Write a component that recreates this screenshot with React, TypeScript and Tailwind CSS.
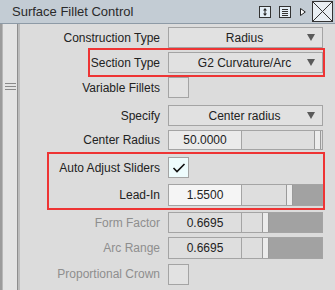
import React from "react";

const font = { fontFamily: '"Liberation Sans", Arial, sans-serif' };

function Arrow() {
  return (
    <svg width="8" height="7" viewBox="0 0 8 7" className="absolute right-[7px] top-[6px]">
      <path d="M0 0 H8 L4 7 Z" fill="#5a5a5a" />
    </svg>
  );
}

function Dropdown({ text }: { text: string }) {
  return (
    <div className="relative w-[155px] h-[21px] border border-[#a4a4a4] bg-[#e1e1e1] flex items-center justify-center text-[12px] text-[#222]">
      <span className="-ml-[2px]">{text}</span>
      <Arrow />
    </div>
  );
}

function Label({ text, disabled }: { text: string; disabled?: boolean }) {
  return (
    <div
      className={`w-[148px] shrink-0 pr-[8px] text-right text-[12px] whitespace-nowrap ${disabled ? "text-[#8e8e8e]" : "text-[#222]"}`}
    >
      {text}
    </div>
  );
}

function Check({ checked }: { checked?: boolean }) {
  return (
    <div
      className={`w-[21px] h-[21px] border border-[#a4a4a4] flex items-center justify-center ${checked ? "bg-[#eefcfd]" : "bg-[#e2e2e2]"}`}
    >
      {checked && (
        <svg width="14" height="12" viewBox="0 0 14 12">
          <path d="M1.5 6 L5 9.5 L12.5 2" stroke="#111" strokeWidth="1.6" fill="none" />
        </svg>
      )}
    </div>
  );
}

function SliderField({
  value,
  fieldBg,
  leftW,
  fill,
}: {
  value: string;
  fieldBg: string;
  leftW: number;
  fill: boolean;
}) {
  return (
    <div className="flex h-full w-[155px]">
      <div
        className={`w-[74px] h-full border border-[#a4a4a4] flex items-center justify-center text-[12px] text-[#222] ${fieldBg}`}
      >
        {value}
      </div>
      <div className="flex-1 h-full border border-l-0 border-[#a4a4a4] bg-[#dedede] flex">
        <div style={{ width: leftW }} className="h-full" />
        <div className="w-[7px] h-full bg-[#ececec] border-x border-[#9a9a9a]" />
        {fill && <div className="flex-1 h-full bg-[#a2a2a2]" />}
      </div>
    </div>
  );
}

export default function App() {
  return (
    <div style={font} className="w-[335px] h-[290px] bg-[#dcdcdc] flex flex-col overflow-hidden">
      {/* Title bar */}
      <div className="h-[24px] shrink-0 bg-[#c3ccd4] border-b border-[#8d9aa6] flex items-center pl-[12px] pr-[2px]">
        <span className="text-[13px] text-[#2a2a2a] flex-1">Surface Fillet Control</span>
        <svg width="12" height="12" viewBox="0 0 12 12" className="mr-[8px]">
          <rect x="0.5" y="0.5" width="11" height="11" fill="#e4eef6" stroke="#333" />
          <path d="M6 2 L8 4.5 H4 Z M6 10 L8 7.5 H4 Z" fill="#222" />
          <path d="M6 4 V8" stroke="#222" />
        </svg>
        <svg width="12" height="12" viewBox="0 0 12 12" className="mr-[9px]">
          <rect x="0.5" y="0.5" width="11" height="11" fill="#e4eef6" stroke="#333" />
          <path d="M3 3.5 H9 M3 5.5 H9 M3 7.5 H9 M3 9.5 H9" stroke="#333" />
        </svg>
        <svg width="6" height="8" viewBox="0 0 6 8" className="mr-[6px]">
          <path d="M0.5 0.5 L5.3 4 L0.5 7.5 Z" fill="#fff" stroke="#222" />
        </svg>
        <svg width="21" height="21" viewBox="0 0 21 21">
          <rect x="0.5" y="0.5" width="20" height="20" fill="#e8eef3" stroke="#333" />
          <path d="M1 1 L20 20 M20 1 L1 20" stroke="#333" />
        </svg>
      </div>
      <div className="flex flex-1">
        {/* Left strip */}
        <div className="w-[20px] h-full flex shrink-0">
          <div className="w-[3px] h-full bg-[#9c9c9c] border-r border-[#b8b8b8]" />
          <div className="w-[14px] h-full bg-[#e4e4e4] pt-[59px] flex flex-col items-center gap-[2px]">
            <div className="w-[11px] h-[1px] bg-[#8a8a8a]" />
            <div className="w-[11px] h-[1px] bg-[#8a8a8a]" />
            <div className="w-[11px] h-[1px] bg-[#8a8a8a]" />
          </div>
          <div className="w-[3px] h-full bg-[#bcbcbc] border-l border-[#8e8e8e]" />
        </div>
        {/* Main */}
        <div className="flex-1 flex flex-col pt-[3px]">
          <div className="flex items-center h-[21px]">
            <Label text="Construction Type" />
            <Dropdown text="Radius" />
          </div>
          <div className="relative flex items-center h-[21px] mt-[4px]">
            <div className="absolute left-[68px] -top-[4px] w-[237px] h-[29px] border-2 border-[#ee3434]" />
            <Label text="Section Type" />
            <Dropdown text="G2 Curvature/Arc" />
          </div>
          <div className="flex items-center h-[21px] mt-[4px]">
            <Label text="Variable Fillets" />
            <Check />
          </div>
          <div className="flex items-center h-[21px] mt-[7px]">
            <Label text="Specify" />
            <Dropdown text="Center radius" />
          </div>
          <div className="flex items-center h-[20px] mt-[4px]">
            <Label text="Center Radius" />
            <SliderField value="50.0000" fieldBg="bg-[#ebebeb]" leftW={72} fill={false} />
          </div>
          <div className="relative mt-[7px]">
            <div className="absolute left-[27px] -top-[5px] w-[278px] h-[58px] border-2 border-[#ee3434]" />
            <div className="flex items-center h-[21px]">
              <Label text="Auto Adjust Sliders" />
              <Check checked />
            </div>
            <div className="flex items-center h-[22px] mt-[6px]">
              <Label text="Lead-In" />
              <SliderField value="1.5500" fieldBg="bg-[#f5f5f5]" leftW={44} fill />
            </div>
          </div>
          <div className="flex items-center h-[21px] mt-[6px]">
            <Label text="Form Factor" disabled />
            <SliderField value="0.6695" fieldBg="bg-[#dedede]" leftW={20} fill />
          </div>
          <div className="flex items-center h-[22px] mt-[4px]">
            <Label text="Arc Range" disabled />
            <SliderField value="0.6695" fieldBg="bg-[#dedede]" leftW={20} fill />
          </div>
          <div className="flex items-center h-[22px] mt-[4px]">
            <Label text="Proportional Crown" disabled />
            <Check />
          </div>
        </div>
      </div>
    </div>
  );
}
